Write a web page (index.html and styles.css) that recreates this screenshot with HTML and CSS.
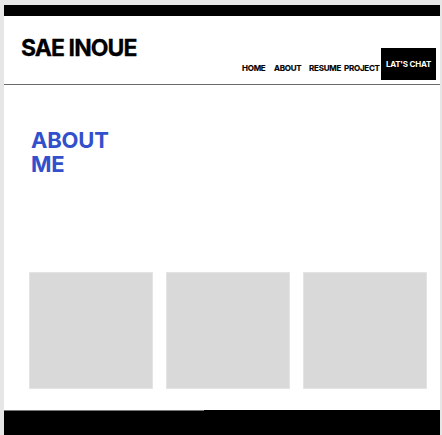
FILE: index.html
```html
<!DOCTYPE html>
<html lang="en">
<head>
<meta charset="utf-8">
<title>Sae Inoue</title>
<link rel="stylesheet" href="styles.css">
</head>
<body>
<div class="page">
  <div class="topbar"></div>
  <header class="header">
    <div class="logo">SAE INOUE</div>
    <nav class="nav">
      <a class="nav-link w-home" href="#">HOME</a>
      <a class="nav-link w-about" href="#">ABOUT</a>
      <a class="nav-link w-resume" href="#">RESUME</a>
      <a class="nav-link w-project" href="#">PROJECT</a>
      <a class="chat" href="#">LAT'S CHAT</a>
    </nav>
  </header>
  <main class="main">
    <h1 class="title">ABOUT<br>ME</h1>
    <div class="cards">
      <div class="card"></div>
      <div class="card"></div>
      <div class="card"></div>
    </div>
  </main>
  <footer class="footer"><div class="footer-line"></div></footer>
</div>
</body>
</html>
```
FILE: styles.css
```css
html, body {
  margin: 0;
  padding: 0;
  background: #e6e6e6;
  font-family: Inter, "Liberation Sans", sans-serif;
}
.page {
  margin: 5px 2px 0 4px;
  background: #ffffff;
  height: 430px;
  display: flex;
  flex-direction: column;
}
.topbar {
  height: 11px;
  background: #000;
}
.header {
  height: 68px;
  border-bottom: 1px solid #6b6b6b;
  display: flex;
  justify-content: space-between;
  align-items: flex-start;
  padding-left: 17px;
}
.logo {
  margin-top: 18px;
  font-size: 23px;
  font-weight: 700;
  letter-spacing: -0.04em;
  color: #000;
  -webkit-text-stroke: 0.3px #000;
}
.nav {
  display: flex;
  align-items: flex-start;
  margin-top: 32px;
  margin-right: 4px;
}
.nav-link {
  font-size: 8px;
  font-weight: 700;
  color: #000;
  text-decoration: none;
  letter-spacing: -0.03em;
  margin-top: 15px;
  -webkit-text-stroke: 0.15px #000;
}
.w-home { width: 32px; }
.w-about { width: 35px; }
.w-resume { width: 35px; }
.w-project { width: 37px; }
.chat {
  width: 55px;
  height: 32px;
  background: #000;
  color: #fff;
  font-size: 8px;
  font-weight: 700;
  letter-spacing: -0.03em;
  text-decoration: none;
  display: flex;
  justify-content: center;
  padding-top: 11px;
  box-sizing: border-box;
}
.main {
  flex: 1;
  padding: 0 12px 0 25px;
}
.title {
  margin: 43px 0 0 2px;
  font-size: 22px;
  line-height: 24px;
  font-weight: 700;
  color: #3350cc;
  letter-spacing: -0.01em;
}
.cards {
  margin-top: 96px;
  display: grid;
  grid-template-columns: repeat(3, 124px);
  gap: 13px;
}
.card {
  height: 117px;
  background: #d9d9d9;
  border: 1px solid #e4e4e4;
  box-sizing: border-box;
}
.footer {
  height: 25px;
  background: #000;
}
.footer-line {
  width: 200px;
  height: 1px;
  background: #777;
}
```
